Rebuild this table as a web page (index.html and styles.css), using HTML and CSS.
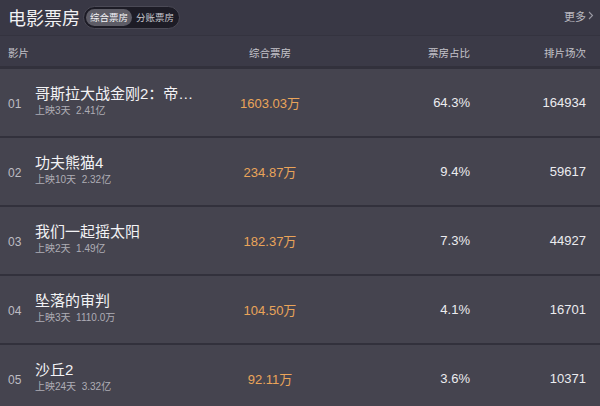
FILE: index.html
```html
<!DOCTYPE html>
<html lang="zh-CN">
<head>
<meta charset="utf-8">
<title>电影票房</title>
<link rel="stylesheet" href="styles.css">
</head>
<body>
<div class="page">
  <header class="top">
    <h1 class="title">电影票房</h1>
    <div class="toggle">
      <span class="seg seg-on">综合票房</span>
      <span class="seg">分账票房</span>
    </div>
    <a class="more">更多<svg class="chev" width="6" height="9" viewBox="0 0 6 9"><path d="M1 1l3.5 3.5L1 8" fill="none" stroke="#9a99a3" stroke-width="1.1"/></svg></a>
  </header>
  <div class="thead grid">
    <span class="c-film">影片</span>
    <span class="c-box">综合票房</span>
    <span class="c-ratio">票房占比</span>
    <span class="c-count">排片场次</span>
  </div>
  <div class="rows">
    <div class="row grid">
      <div class="c-film"><span class="rank">01</span><div class="info"><div class="name">哥斯拉大战金刚2：帝…</div><div class="sub">上映3天&nbsp; 2.41亿</div></div></div>
      <span class="c-box money">1603.03万</span>
      <span class="c-ratio num">64.3%</span>
      <span class="c-count num">164934</span>
    </div>
    <div class="row grid">
      <div class="c-film"><span class="rank">02</span><div class="info"><div class="name">功夫熊猫4</div><div class="sub">上映10天&nbsp; 2.32亿</div></div></div>
      <span class="c-box money">234.87万</span>
      <span class="c-ratio num">9.4%</span>
      <span class="c-count num">59617</span>
    </div>
    <div class="row grid">
      <div class="c-film"><span class="rank">03</span><div class="info"><div class="name">我们一起摇太阳</div><div class="sub">上映2天&nbsp; 1.49亿</div></div></div>
      <span class="c-box money">182.37万</span>
      <span class="c-ratio num">7.3%</span>
      <span class="c-count num">44927</span>
    </div>
    <div class="row grid">
      <div class="c-film"><span class="rank">04</span><div class="info"><div class="name">坠落的审判</div><div class="sub">上映3天&nbsp; 1110.0万</div></div></div>
      <span class="c-box money">104.50万</span>
      <span class="c-ratio num">4.1%</span>
      <span class="c-count num">16701</span>
    </div>
    <div class="row grid">
      <div class="c-film"><span class="rank">05</span><div class="info"><div class="name">沙丘2</div><div class="sub">上映24天&nbsp; 3.32亿</div></div></div>
      <span class="c-box money">92.11万</span>
      <span class="c-ratio num">3.6%</span>
      <span class="c-count num">10371</span>
    </div>
  </div>
</div>
</body>
</html>
```
FILE: styles.css
```css
* { box-sizing: border-box; }
html, body {
  margin: 0;
  padding: 0;
  background: #393845;
  width: 600px;
  height: 406px;
  overflow: hidden;
}
body {
  font-family: "Liberation Sans", "Noto Sans CJK SC", sans-serif;
  color: #e6e6ea;
}
.page {
  width: 600px;
}
.top {
  height: 36px;
  display: flex;
  align-items: center;
  padding: 0 6px 0 8px;
  background: #393845;
  border-bottom: 1px solid #34333f;
}
.title {
  margin: -1px 3px 0 0;
  font-family: "Noto Sans CJK SC", sans-serif;
  font-size: 18px;
  font-weight: 400;
  color: #f2f2f4;
  line-height: 22px;
}
.toggle {
  display: flex;
  align-items: center;
  height: 23px;
  padding: 0 1px;
  border-radius: 12px;
  background: #1d1c26;
  border: 1px solid #4b4a56;
  margin-top: -1px;
}
.seg {
  font-family: "Noto Sans CJK SC", sans-serif;
  font-size: 9.5px;
  line-height: 17px;
  height: 17px;
  padding: 0 4px;
  border-radius: 9px;
  color: #c9c9cf;
}
.seg-on {
  background: #5d5c66;
  color: #f4f4f6;
  margin-left: 1px;
}
.more {
  margin-left: auto;
  display: flex;
  align-items: center;
  gap: 2px;
  font-family: "Noto Sans CJK SC", sans-serif;
  font-size: 11px;
  color: #b9b8c0;
  margin-top: -4px;
}
.grid {
  display: grid;
  grid-template-columns: 222px 80px 160px 116px;
  padding: 0 14px 0 8px;
  align-items: center;
}
.thead {
  height: 30px;
  background: #3b3a47;
  font-family: "Noto Sans CJK SC", sans-serif;
  font-size: 10.5px;
  color: #c4c3ca;
  padding-top: 3px;
}
.c-box { text-align: center; }
.c-ratio, .c-count { text-align: right; }
.rows {
  display: flex;
  flex-direction: column;
  gap: 2px;
  background: #32313c;
  padding-top: 3px;
}
.row {
  height: 67px;
  background: #45444f;
}
.row .c-film {
  display: flex;
  align-items: center;
}
.rank {
  width: 27px;
  font-size: 12px;
  color: #bdbcc3;
  padding-top: 3px;
}
.info {
  display: flex;
  flex-direction: column;
  margin-top: -4px;
}
.name {
  font-family: "Liberation Sans", "Noto Sans CJK SC", sans-serif;
  font-size: 15px;
  line-height: 20px;
  color: #f3f3f5;
  white-space: nowrap;
}
.sub {
  font-family: "Liberation Sans", "Noto Sans CJK SC", sans-serif;
  font-size: 10px;
  line-height: 14px;
  color: #aeadb5;
}
.money {
  font-size: 13px;
  color: #eaa45a;
}
.num {
  font-size: 13px;
  color: #ececef;
}
```
